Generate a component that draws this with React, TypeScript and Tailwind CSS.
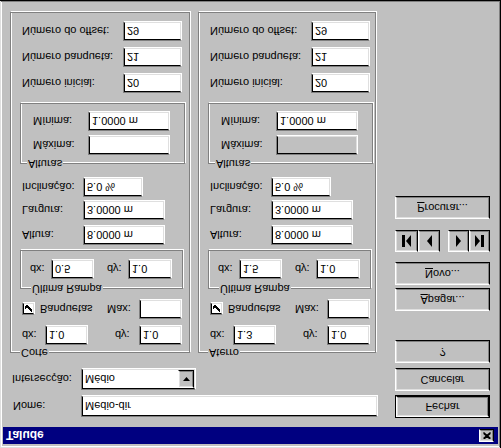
import React from "react";

function Field({ cls, value, disabled }: { cls: string; value?: string; disabled?: boolean }) {
  return (
    <div className={`${cls} border border-t-[#808080] border-l-[#808080] border-b-white border-r-white`}>
      <div
        className={`h-full border border-t-black border-l-black border-b-[#dfdfdf] border-r-[#dfdfdf] ${
          disabled ? "bg-[#c0c0c0]" : "bg-white"
        } pl-[2px] flex items-center text-[11px] text-black whitespace-nowrap overflow-hidden`}
      >
        {value}
      </div>
    </div>
  );
}

function Btn({ children, cls, def }: { children?: React.ReactNode; cls: string; def?: boolean }) {
  const inner = (
    <div className="h-full w-full bg-[#c0c0c0] border border-t-white border-l-white border-b-black border-r-black">
      <div className="h-full w-full border border-t-[#dfdfdf] border-l-[#dfdfdf] border-b-[#808080] border-r-[#808080] flex items-center justify-center text-[11px] text-black">
        {children}
      </div>
    </div>
  );
  return def ? <div className={`${cls} border border-black`}>{inner}</div> : <div className={cls}>{inner}</div>;
}

function Check() {
  return (
    <div className="w-[13px] h-[13px] border border-t-[#808080] border-l-[#808080] border-b-white border-r-white">
      <div className="w-full h-full border border-t-black border-l-black border-b-[#dfdfdf] border-r-[#dfdfdf] bg-white flex items-center justify-center">
        <svg width="9" height="9" viewBox="0 0 9 9">
          <path d="M1 4 L3 6 L8 1 M1 5 L3 7 L8 2 M1 6 L3 8 L8 3" stroke="#000" strokeWidth="1" fill="none" />
        </svg>
      </div>
    </div>
  );
}

function Group({
  title,
  wCls,
  v,
  maxDisabled,
}: {
  title: string;
  wCls: string;
  v: { rDx: string; rDy: string; bDx: string; bDy: string };
  maxDisabled?: boolean;
}) {
  return (
    <div className={`relative ${wCls} h-[341px] border border-[#808080] shadow-[1px_1px_0_#fff,inset_1px_1px_0_#fff] flex flex-col pl-[11px]`}>
      <span className="absolute left-[9px] -top-[8px] bg-[#c0c0c0] px-[1px] text-[11px] leading-[14px]">{title}</span>

      <div className="mt-[7px] h-[20px] flex items-center">
        <span className="w-[23px]">dx:</span>
        <Field cls="w-[43px] h-[20px]" value={v.bDx} />
        <span className="w-[51px] pl-[27px]">dy:</span>
        <Field cls="w-[43px] h-[20px]" value={v.bDy} />
      </div>

      <div className="mt-[6px] h-[20px] flex items-center">
        <Check />
        <span className="w-[72px] pl-[5px]">Banquetas</span>
        <span className="w-[32px]">Max:</span>
        <Field cls="w-[43px] h-[20px]" value="" />
      </div>

      <div className="relative mt-[10px] -ml-[2px] w-[163px] h-[39px] border border-[#808080] shadow-[1px_1px_0_#fff,inset_1px_1px_0_#fff] pt-[9px] pl-[9px]">
        <span className="absolute left-[10px] -top-[8px] bg-[#c0c0c0] px-[1px] text-[11px] leading-[14px]">Última Rampa</span>
        <div className="h-[20px] flex items-center">
          <span className="w-[21px]">dx:</span>
          <Field cls="w-[43px] h-[20px]" value={v.rDx} />
          <span className="w-[34px] pl-[13px]">dy:</span>
          <Field cls="w-[44px] h-[20px]" value={v.rDy} />
        </div>
      </div>

      <div className="mt-[5px] h-[20px] flex items-center">
        <span className="w-[61px]">Altura:</span>
        <Field cls="w-[82px] h-[20px]" value="8.0000 m" />
      </div>
      <div className="mt-[5px] h-[20px] flex items-center">
        <span className="w-[61px]">Largura:</span>
        <Field cls="w-[82px] h-[20px]" value="3.0000 m" />
      </div>
      <div className="mt-[3px] h-[20px] flex items-center">
        <span className="w-[61px]">Inclinação:</span>
        <Field cls="w-[60px] h-[20px]" value="5.0 %" />
      </div>

      <div className="relative mt-[13px] -ml-[2px] w-[165px] h-[61px] border border-[#808080] shadow-[1px_1px_0_#fff,inset_1px_1px_0_#fff] pt-[8px] pl-[12px]">
        <span className="absolute left-[6px] -top-[8px] bg-[#c0c0c0] px-[1px] text-[11px] leading-[14px]">Alturas</span>
        <div className="h-[20px] flex items-center">
          <span className="w-[55px]">Máxima:</span>
          <Field cls="w-[82px] h-[20px]" value="" disabled={maxDisabled} />
        </div>
        <div className="mt-[4px] h-[20px] flex items-center">
          <span className="w-[55px]">Mínima:</span>
          <Field cls="w-[82px] h-[20px]" value="1.0000 m" />
        </div>
      </div>

      <div className="mt-[10px] h-[20px] flex items-center">
        <span className="w-[101px]">Número inicial:</span>
        <Field cls="w-[59px] h-[20px]" value="20" />
      </div>
      <div className="mt-[6px] h-[20px] flex items-center">
        <span className="w-[101px]">Número banqueta:</span>
        <Field cls="w-[59px] h-[20px]" value="21" />
      </div>
      <div className="mt-[6px] h-[20px] flex items-center">
        <span className="w-[101px]">Número do offset:</span>
        <Field cls="w-[59px] h-[20px]" value="29" />
      </div>
    </div>
  );
}

function Tri({ dir, bar }: { dir: "l" | "r"; bar?: boolean }) {
  return (
    <svg width="11" height="12" viewBox="0 0 11 12">
      {dir === "l" ? (
        <>
          {bar && <rect x="1" y="0" width="3" height="12" fill="#000" />}
          <path d={bar ? "M10 0 L5 6 L10 12 Z" : "M8 0 L3 6 L8 12 Z"} fill="#000" />
        </>
      ) : (
        <>
          <path d={bar ? "M1 0 L6 6 L1 12 Z" : "M3 0 L8 6 L3 12 Z"} fill="#000" />
          {bar && <rect x="7" y="0" width="3" height="12" fill="#000" />}
        </>
      )}
    </svg>
  );
}

export default function App() {
  return (
    <div className="w-[501px] h-[448px] overflow-hidden bg-white">
      <div className="[transform:scaleY(-1)] w-[501px] h-[448px] bg-[#c0c0c0] shadow-[inset_-1px_-1px_0_#000,inset_1px_1px_0_#dfdfdf,inset_-2px_-2px_0_#808080,inset_2px_2px_0_#fff] pt-[4px] px-[3px] flex flex-col font-['Liberation_Sans',Arial,sans-serif] text-[11px] text-black">
        <div className="h-[17px] bg-[#000080] flex items-center justify-between pl-[3px] pr-[4px]">
          <span className="text-white font-bold text-[12px]">Talude</span>
          <Btn cls="w-[15px] h-[13px]">
            <svg width="8" height="7" viewBox="0 0 8 7">
              <path d="M0.5 0.5 L7.5 6.5 M7.5 0.5 L0.5 6.5 M1.5 0.5 L7.5 5.8 M6.5 0.5 L0.5 5.8" stroke="#000" strokeWidth="1.4" fill="none" />
            </svg>
          </Btn>
        </div>

        <div className="flex">
          <div className="w-[375px] flex flex-col">
            <div className="mt-[10px] h-[22px] flex items-center">
              <span className="w-[78px] pl-[10px]">Nome:</span>
              <Field cls="w-[297px] h-[22px]" value="Medio-dir" />
            </div>
            <div className="mt-[5px] h-[22px] flex items-center">
              <span className="w-[78px] pl-[9px]">Intersecção:</span>
              <div className="w-[115px] h-[22px] border border-t-[#808080] border-l-[#808080] border-b-white border-r-white">
                <div className="h-full border border-t-black border-l-black border-b-[#dfdfdf] border-r-[#dfdfdf] bg-white flex items-center">
                  <span className="flex-1 pl-[2px]">Médio</span>
                  <Btn cls="w-[16px] h-full">
                    <svg width="7" height="4" viewBox="0 0 7 4">
                      <path d="M0 0 L7 0 L3.5 4 Z" fill="#000" />
                    </svg>
                  </Btn>
                </div>
              </div>
            </div>
            <div className="mt-[15px] flex pl-[7px] gap-[8px]">
              <Group title="Corte" wCls="w-[180px]" v={{ rDx: "0.5", rDy: "1.0", bDx: "1.0", bDy: "1.0" }} />
              <Group title="Aterro" wCls="w-[178px]" v={{ rDx: "1.5", rDy: "1.0", bDx: "1.3", bDy: "1.0" }} maxDisabled />
            </div>
          </div>

          <div className="ml-[17px] w-[95px] flex flex-col">
            <Btn cls="mt-[9px] h-[23px]" def>
              Fechar
            </Btn>
            <Btn cls="mt-[4px] h-[23px]">Cancelar</Btn>
            <Btn cls="mt-[5px] h-[23px]">?</Btn>
            <Btn cls="mt-[29px] h-[23px]">
              <span>
                <span className="underline">A</span>pagar...
              </span>
            </Btn>
            <Btn cls="mt-[3px] h-[23px]">
              <span>
                <span className="underline">N</span>ovo...
              </span>
            </Btn>
            <div className="mt-[10px] h-[22px] flex">
              <Btn cls="w-[23px] h-[22px]">
                <Tri dir="l" bar />
              </Btn>
              <Btn cls="w-[22px] h-[22px]">
                <Tri dir="l" />
              </Btn>
              <div className="w-[8px]" />
              <Btn cls="w-[21px] h-[22px]">
                <Tri dir="r" />
              </Btn>
              <Btn cls="w-[21px] h-[22px]">
                <Tri dir="r" bar />
              </Btn>
            </div>
            <Btn cls="mt-[11px] h-[23px]">
              <span>
                <span className="underline">P</span>rocurar...
              </span>
            </Btn>
          </div>
        </div>
      </div>
    </div>
  );
}
